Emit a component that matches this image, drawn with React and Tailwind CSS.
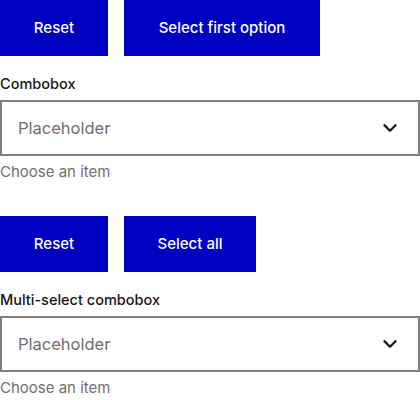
import { ChevronDown } from 'lucide-react';

function Buttons({ second, secondWidth }) {
  return (
    <div className="flex gap-4">
      <button className="h-14 w-[108px] bg-[#0000c0] text-white text-[15px] font-medium">
        Reset
      </button>
      <button className={`h-14 ${secondWidth} bg-[#0000c0] text-white text-[15px] font-medium`}>
        {second}
      </button>
    </div>
  );
}

function Combobox({ label }) {
  return (
    <div>
      <label className="mt-[18px] block text-[14.5px] leading-5 font-medium text-[#161616]">
        {label}
      </label>
      <div className="mt-[6px] h-14 border-2 border-[#808080] flex items-center pl-4 pr-4">
        <span className="flex-1 text-[16.5px] text-[#6f6f6f]">Placeholder</span>
        <ChevronDown size={22} strokeWidth={2.6} className="mr-[1px] text-[#161616]" />
      </div>
      <p className="mt-[6px] text-[15px] leading-5 text-[#6f6f6f]">Choose an item</p>
    </div>
  );
}

export default function App() {
  return (
    <div className="w-[420px] bg-white font-['Inter',sans-serif]">
      <section className="h-[216px]">
        <Buttons second="Select first option" secondWidth="w-[196px]" />
        <Combobox label="Combobox" />
      </section>
      <section>
        <Buttons second="Select all" secondWidth="w-[132px]" />
        <Combobox label="Multi-select combobox" />
      </section>
    </div>
  );
}
